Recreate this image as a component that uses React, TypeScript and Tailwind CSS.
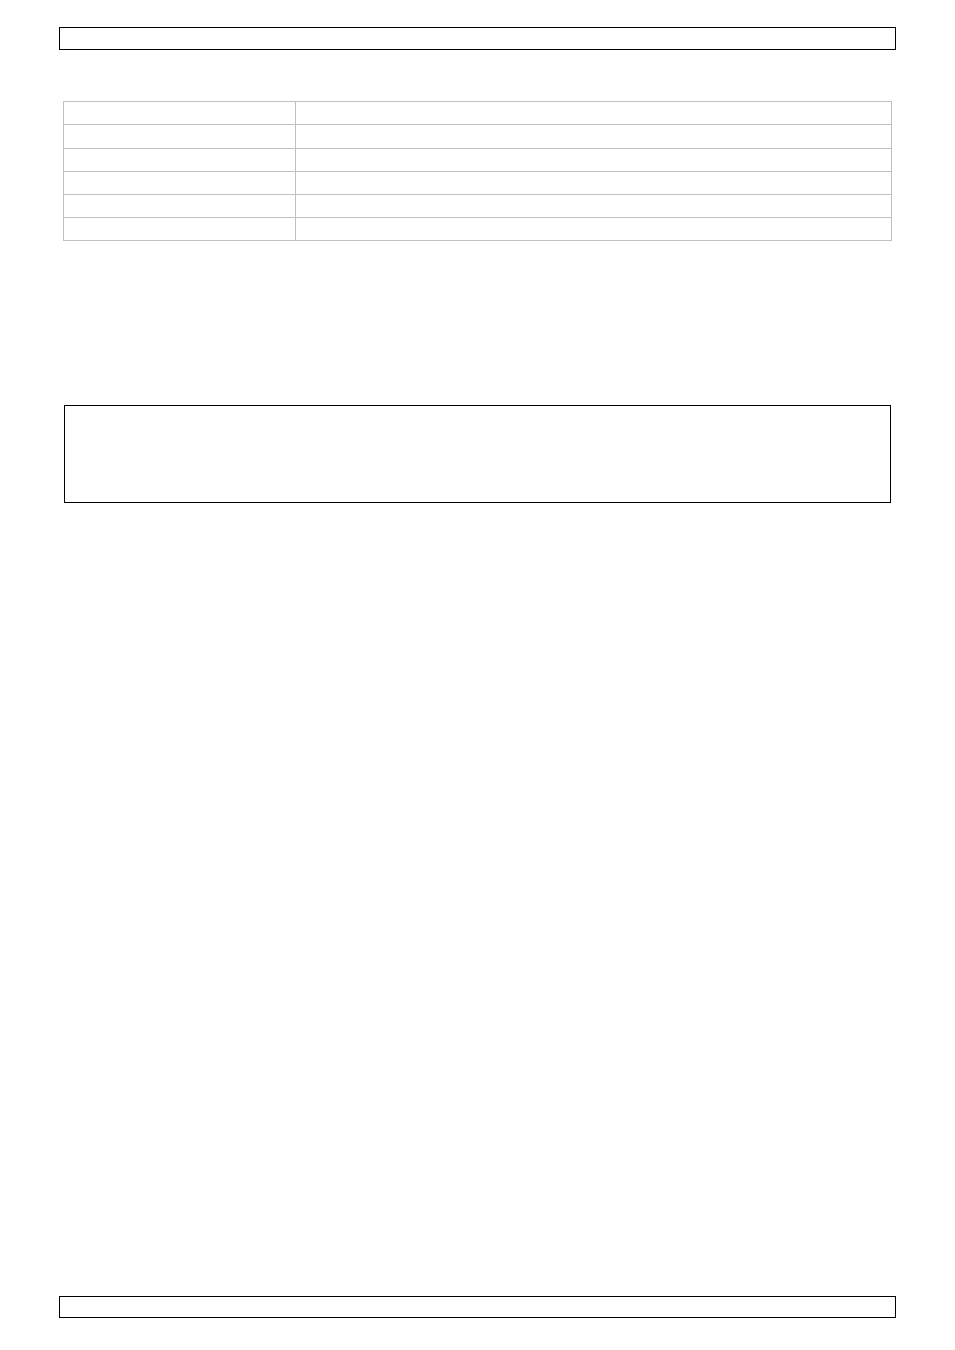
const rows = [0, 1, 2, 3, 4, 5];

export default function App() {
  return (
    <div className="flex h-[1350px] flex-col bg-white font-['Liberation_Sans',Arial,sans-serif] text-[11px] text-black">
      {/* page header */}
      <header className="ml-[59px] mt-[27px] h-[23px] w-[837px] border border-black" />

      {/* spec table */}
      <div className="ml-[63px] mt-[51px] w-[829px] border-b border-[#c0c0c0]">
        {rows.map((r) => (
          <div
            key={r}
            className={`grid grid-cols-[232px_1fr] border-x border-t border-[#c0c0c0] ${r === 1 ? "h-[24px]" : "h-[23px]"}`}
          >
            <div className="border-r border-[#c0c0c0]" />
            <div />
          </div>
        ))}
      </div>

      {/* notice box */}
      <section className="ml-[64px] mt-[164px] h-[98px] w-[827px] border border-black" />

      {/* page footer */}
      <footer className="mb-[32px] ml-[59px] mt-auto h-[22px] w-[837px] border border-black" />
    </div>
  );
}
